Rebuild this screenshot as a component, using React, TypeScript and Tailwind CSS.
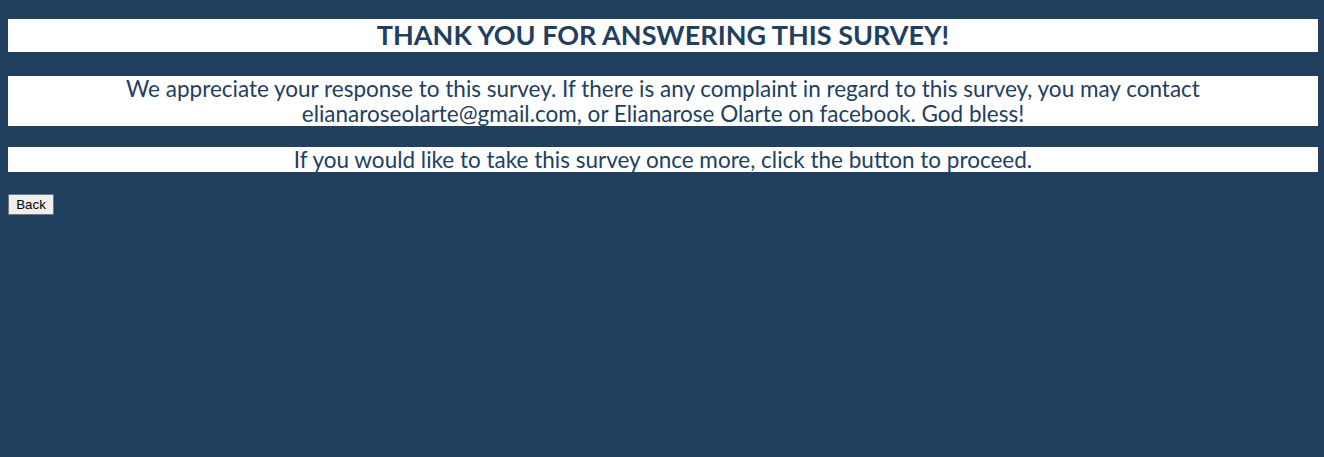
import React from 'react';

const App: React.FC = () => {
  return (
    <div className="min-h-[457px] bg-[#21405f] pt-2 pl-2 pr-[6px] pb-2 font-['Lato','Open_Sans',sans-serif] text-[#21405f]">
      <h1 className="mt-[11px] h-[33px] bg-white text-center text-[27px] font-bold leading-[32px]">
        THANK YOU FOR ANSWERING THIS SURVEY!
      </h1>

      <p className="mt-[24px] bg-white text-center text-[22.5px] leading-[25px]">
        We appreciate your response to this survey. If there is any complaint in regard to this survey, you may contact
        <br />
        elianaroseolarte@gmail.com, or Elianarose Olarte on facebook. God bless!
      </p>

      <p className="mt-[21px] h-[25px] bg-white text-center text-[22.5px] leading-[25px]">
        If you would like to take this survey once more, click the button to proceed.
      </p>

      <button className="mt-[22px] block h-[21px] w-[46px] border border-[#767676] bg-[#efefef] font-['Liberation_Sans',Arial,sans-serif] text-[13.33px] leading-none text-black">
        Back
      </button>
    </div>
  );
};

export default App;
